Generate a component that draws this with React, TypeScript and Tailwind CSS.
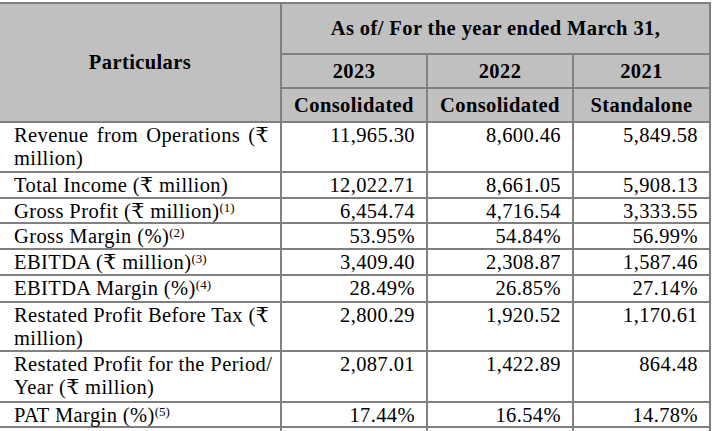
import React from "react";

type Row = {
  lines: React.ReactNode[];
  vals: [string, string, string];
};

const Sup = ({ n }: { n: number }) => (
  <sup className="text-[13px] tracking-normal">({n})</sup>
);

const rows: Row[] = [
  { lines: ["Revenue from Operations (₹", "million)"], vals: ["11,965.30", "8,600.46", "5,849.58"] },
  { lines: ["Total Income (₹ million)"], vals: ["12,022.71", "8,661.05", "5,908.13"] },
  { lines: [<>Gross Profit (₹ million)<Sup n={1} /></>], vals: ["6,454.74", "4,716.54", "3,333.55"] },
  { lines: [<>Gross Margin (%)<Sup n={2} /></>], vals: ["53.95%", "54.84%", "56.99%"] },
  { lines: [<>EBITDA (₹ million)<Sup n={3} /></>], vals: ["3,409.40", "2,308.87", "1,587.46"] },
  { lines: [<>EBITDA Margin (%)<Sup n={4} /></>], vals: ["28.49%", "26.85%", "27.14%"] },
  { lines: ["Restated Profit Before Tax (₹", "million)"], vals: ["2,800.29", "1,920.52", "1,170.61"] },
  { lines: ["Restated Profit for the Period/", "Year (₹ million)"], vals: ["2,087.01", "1,422.89", "864.48"] },
  { lines: [<>PAT Margin (%)<Sup n={5} /></>], vals: ["17.44%", "16.54%", "14.78%"] },
];

export default function App() {
  return (
    <div className="w-[712px] h-[431px] overflow-hidden bg-white text-black font-['Liberation_Serif','DejaVu_Serif',serif] text-[20.5px] leading-[23px] tracking-[0.4px]">
      <div className="mt-[2px] w-[711px] grid grid-cols-[280px_144px_144px_135px] grid-rows-[49px_32px_32px_48px_24px_23px_24px_24px_25px_47px_49px_23px_40px] gap-[2px] bg-[#808080] pt-[2px] pr-[2px]">
        {/* Header */}
        <div className="row-span-3 bg-[#c0c0c0] flex items-center justify-center font-bold">
          Particulars
        </div>
        <div className="col-span-3 bg-[#c0c0c0] flex items-center justify-center font-bold">
          As of/ For the year ended March 31,
        </div>
        <div className="bg-[#c0c0c0] flex items-center justify-center font-bold">2023</div>
        <div className="bg-[#c0c0c0] flex items-center justify-center font-bold">2022</div>
        <div className="bg-[#c0c0c0] flex items-center justify-center font-bold">2021</div>
        <div className="bg-[#c0c0c0] flex items-center justify-center font-bold">Consolidated</div>
        <div className="bg-[#c0c0c0] flex items-center justify-center font-bold">Consolidated</div>
        <div className="bg-[#c0c0c0] flex items-center justify-center font-bold">Standalone</div>

        {/* Body */}
        {rows.map((r, i) => (
          <React.Fragment key={i}>
            <div className="bg-white pl-[14px] pr-[11px] pt-[1px]">
              {r.lines.map((l, j) => (
                <div
                  key={j}
                  className={
                    r.lines.length > 1 && j === 0
                      ? "text-justify [text-align-last:justify] whitespace-nowrap"
                      : "text-left whitespace-nowrap"
                  }
                >
                  {l}
                </div>
              ))}
            </div>
            {r.vals.map((v, k) => (
              <div key={k} className="bg-white pr-[11px] pt-[1px] text-right">
                {v}
              </div>
            ))}
          </React.Fragment>
        ))}
        <div className="bg-white" />
        <div className="bg-white" />
        <div className="bg-white" />
        <div className="bg-white" />
      </div>
    </div>
  );
}
